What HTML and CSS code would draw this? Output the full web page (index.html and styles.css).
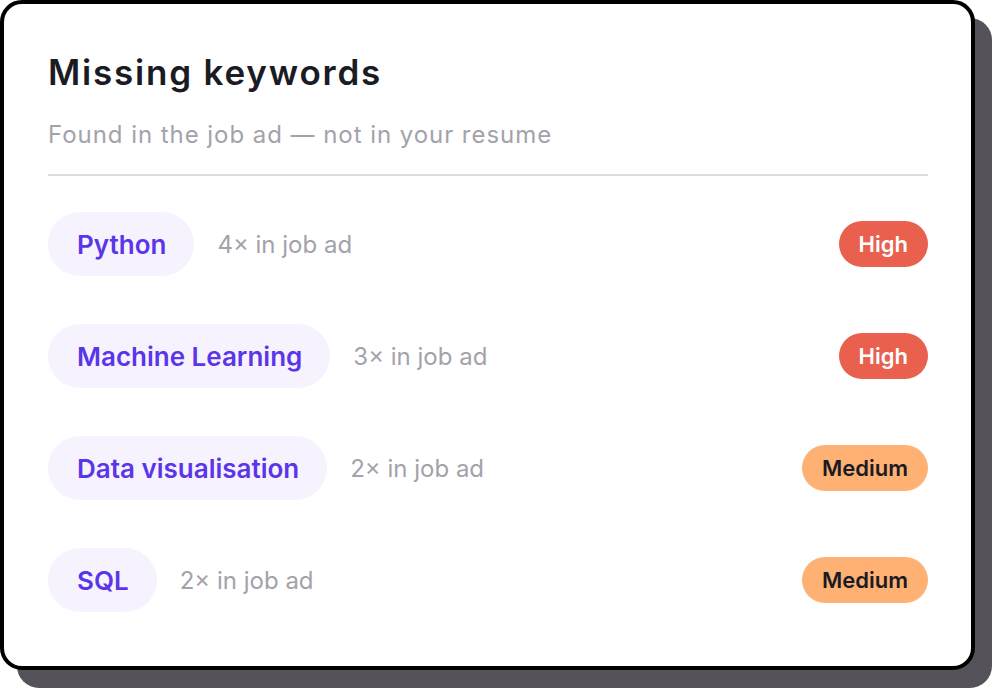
FILE: index.html
```html
<!DOCTYPE html>
<html>
<head>
<meta charset="utf-8">
<link rel="stylesheet" href="styles.css">
</head>
<body>
<div class="card">
  <h1 class="title">Missing keywords</h1>
  <p class="subtitle">Found in the job ad — not in your resume</p>
  <div class="divider"></div>
  <ul class="list">
    <li class="row">
      <span class="pill">Python</span>
      <span class="count">4× in job ad</span>
      <span class="badge high">High</span>
    </li>
    <li class="row">
      <span class="pill">Machine Learning</span>
      <span class="count">3× in job ad</span>
      <span class="badge high">High</span>
    </li>
    <li class="row">
      <span class="pill">Data visualisation</span>
      <span class="count">2× in job ad</span>
      <span class="badge medium">Medium</span>
    </li>
    <li class="row">
      <span class="pill">SQL</span>
      <span class="count">2× in job ad</span>
      <span class="badge medium">Medium</span>
    </li>
  </ul>
</div>
</body>
</html>
```

FILE: styles.css
```css
html, body {
  margin: 0;
  padding: 0;
  background: #ffffff;
}
body {
  font-family: Inter, "Noto Sans", sans-serif;
  width: 992px;
  height: 688px;
  overflow: hidden;
}
.card {
  box-sizing: border-box;
  width: 975px;
  height: 670px;
  border: 4px solid #000;
  border-radius: 22px;
  background: #fff;
  box-shadow: 17px 18px 0 #555259;
  padding: 46px 43px 0 44px;
}
.title {
  margin: 0;
  font-size: 35px;
  line-height: 44px;
  font-weight: 600;
  color: #1b1b24;
  letter-spacing: 1.8px;
}
.subtitle {
  margin: 25px 0 0;
  font-size: 24px;
  line-height: 32px;
  color: #a3a2ab;
  letter-spacing: 0.95px;
}
.divider {
  margin-top: 23px;
  height: 2px;
  background: #dcdce0;
}
.list {
  list-style: none;
  margin: 36px 0 0;
  padding: 0;
  display: flex;
  flex-direction: column;
  gap: 48px;
}
.row {
  display: flex;
  align-items: center;
  height: 64px;
}
.pill {
  display: flex;
  align-items: center;
  height: 64px;
  padding: 0 28px 0 29px;
  border-radius: 32px;
  background: #f6f3ff;
  color: #5b36e8;
  font-size: 26px;
  font-weight: 600;
}
.count {
  margin-left: 23px;
  font-size: 24px;
  color: #a3a2ab;
}
.badge {
  margin-left: auto;
  display: flex;
  align-items: center;
  height: 46px;
  padding: 0 20px;
  border-radius: 23px;
  font-size: 22px;
  font-weight: 600;
}
.high {
  background: #e9604f;
  color: #fff;
}
.medium {
  background: #ffb173;
  color: #1b1b24;
}
```
